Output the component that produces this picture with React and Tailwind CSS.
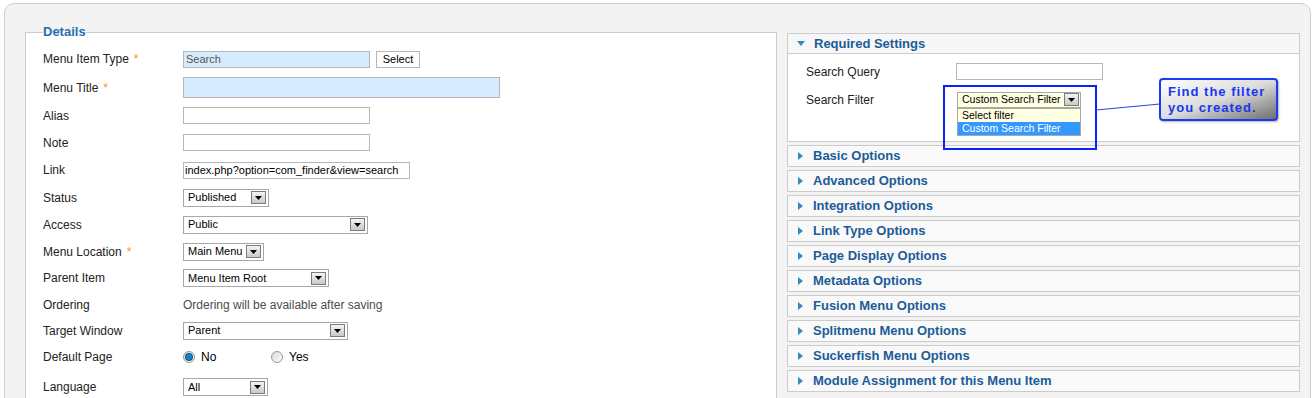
import React from 'react';

const font = "font-['Liberation_Sans',Arial,sans-serif]";

function Arrow() {
  return (
    <div className="mr-[2px] flex h-[13px] w-[15px] items-center justify-center border border-[#7c7c7c] bg-linear-to-b from-[#f4f4f4] to-[#c9c9c9]">
      <svg width="7" height="4" viewBox="0 0 7 4">
        <path d="M0 0h7L3.5 4z" fill="#000" />
      </svg>
    </div>
  );
}

function Select({ w, text }) {
  return (
    <div className={`flex h-[18px] items-center justify-between border border-[#a8a8a8] bg-white ${w}`}>
      <span className="whitespace-nowrap pl-[4px] text-[11px] text-black">{text}</span>
      <Arrow />
    </div>
  );
}

function Input({ w, h = 'h-[17px]', blue, children }) {
  return (
    <div className={`flex items-center border border-[#b7b7b7] ${blue ? 'bg-[#d6ebfd]' : 'bg-white'} ${w} ${h}`}>
      {children}
    </div>
  );
}

function Row({ label, req, h, children }) {
  return (
    <div className={`flex items-center ${h}`}>
      <div className="w-[140px] text-[12px] text-[#222]">
        {label}
        {req && <span className="ml-[5px] text-[#f39a1d]">*</span>}
      </div>
      {children}
    </div>
  );
}

function Radio({ checked }) {
  return (
    <span className="flex h-[12px] w-[12px] items-center justify-center rounded-full border border-[#9a9a9a] bg-linear-to-br from-[#d8d8d8] to-white">
      {checked && <span className="h-[6px] w-[6px] rounded-full bg-[#1a7fc0] ring-1 ring-[#0d5a8c]" />}
    </span>
  );
}

function Triangle({ down }) {
  return down ? (
    <svg width="8" height="5" viewBox="0 0 8 5" className="mr-[9px]">
      <path d="M0 0h8L4 5z" fill="#2f8bc4" />
    </svg>
  ) : (
    <svg width="5" height="8" viewBox="0 0 5 8" className="mr-[10px]">
      <path d="M0 0l5 4-5 4z" fill="#2f8bc4" />
    </svg>
  );
}

const options = [
  'Basic Options',
  'Advanced Options',
  'Integration Options',
  'Link Type Options',
  'Page Display Options',
  'Metadata Options',
  'Fusion Menu Options',
  'Splitmenu Menu Options',
  'Suckerfish Menu Options',
  'Module Assignment for this Menu Item',
];

export default function App() {
  return (
    <div className={`h-[398px] overflow-hidden bg-white pl-[4px] pr-[4px] pt-[3px] ${font}`}>
      <div className="h-[420px] w-[1307px] rounded-t-[10px] border border-[#cfcfcf] bg-[#f3f3f3] pl-[20px] pr-[10px] pt-[20px]">
        <div className="flex gap-[10px]">
          {/* Details */}
          <fieldset className="h-[400px] w-[752px] border border-[#cccccc] bg-white px-[17px] pt-[5px]">
            <legend className="text-[13px] font-bold leading-[16px] text-[#2570b0]">Details</legend>

            <Row label="Menu Item Type" req h="h-[28px]">
              <Input w="w-[187px]" blue>
                <span className="pl-[2px] text-[11px] text-[#555]">Search</span>
              </Input>
              <div className="ml-[6px] flex h-[17px] w-[44px] items-center justify-center border border-[#b7b7b7] bg-white text-[11px] text-black">
                Select
              </div>
            </Row>
            <Row label="Menu Title" req h="h-[29px]">
              <Input w="w-[317px]" h="h-[21px]" blue />
            </Row>
            <Row label="Alias" h="h-[27px]">
              <Input w="w-[187px]" />
            </Row>
            <Row label="Note" h="h-[27px]">
              <Input w="w-[187px]" />
            </Row>
            <Row label="Link" h="h-[28px]">
              <Input w="w-[227px]">
                <span className="whitespace-nowrap pl-[1px] text-[11px] text-black">index.php?option=com_finder&amp;view=search</span>
              </Input>
            </Row>
            <Row label="Status" h="h-[27px]">
              <Select w="w-[86px]" text="Published" />
            </Row>
            <Row label="Access" h="h-[27px]">
              <Select w="w-[185px]" text="Public" />
            </Row>
            <Row label="Menu Location" req h="h-[27px]">
              <Select w="w-[81px]" text="Main Menu" />
            </Row>
            <Row label="Parent Item" h="h-[26px]">
              <Select w="w-[146px]" text="Menu Item Root" />
            </Row>
            <Row label="Ordering" h="h-[27px]">
              <span className="text-[12px] text-[#4d4d4d]">Ordering will be available after saving</span>
            </Row>
            <Row label="Target Window" h="h-[25px]">
              <Select w="w-[165px]" text="Parent" />
            </Row>
            <Row label="Default Page" h="h-[28px]">
              <label className="flex w-[88px] items-center gap-[6px] text-[12px] text-black">
                <Radio checked />
                No
              </label>
              <label className="flex items-center gap-[6px] text-[12px] text-black">
                <Radio />
                Yes
              </label>
            </Row>
            <Row label="Language" h="h-[32px]">
              <Select w="w-[85px]" text="All" />
            </Row>
          </fieldset>

          {/* Right column */}
          <div className="relative mt-[9px] flex w-[513px] flex-col gap-[3px]">
            <div className="border border-[#cccccc] bg-white">
              <div className="flex h-[20px] items-center border-b border-[#cccccc] bg-[#f7f7f7] pl-[9px]">
                <Triangle down />
                <span className="text-[13px] font-bold text-[#1c5c98]">Required Settings</span>
              </div>
              <div className="h-[87px] pl-[18px] pt-[9px]">
                <div className="flex h-[17px] items-center">
                  <span className="w-[150px] text-[12px] text-[#222]">Search Query</span>
                  <div className="h-[17px] w-[147px] border border-[#b7b7b7] bg-white" />
                </div>
                <div className="mt-[11px] flex h-[17px] items-center">
                  <span className="w-[151px] text-[12px] text-[#222]">Search Filter</span>
                  <div className="relative">
                    <div className="flex h-[16px] w-[124px] items-center justify-between border border-[#a8a8a8] bg-[#ffffe1]">
                      <span className="whitespace-nowrap pl-[4px] text-[10.5px] text-black">Custom Search Filter</span>
                      <div className="mr-[1px] flex h-[13px] w-[15px] items-center justify-center border border-[#7c7c7c] bg-linear-to-b from-[#f4f4f4] to-[#c9c9c9]">
                        <svg width="7" height="4" viewBox="0 0 7 4">
                          <path d="M0 0h7L3.5 4z" fill="#000" />
                        </svg>
                      </div>
                    </div>
                    <div className="absolute left-0 top-[16px] z-10 w-[124px] whitespace-nowrap border border-[#a8a8a8] text-[10.5px] leading-[13px]">
                      <div className="bg-[#ffffe1] pl-[4px] text-black">Select filter</div>
                      <div className="bg-[#3399ff] pl-[4px] text-white">Custom Search Filter</div>
                    </div>
                  </div>
                </div>
              </div>
            </div>

            {options.map((o) => (
              <div key={o} className="flex h-[22px] items-center border border-[#cccccc] bg-[#f9f9f9] pl-[10px]">
                <Triangle />
                <span className="text-[13px] font-bold text-[#1c5c98]">{o}</span>
              </div>
            ))}

            {/* annotation */}
            <div className="absolute left-[156px] top-[52px] z-20 h-[65px] w-[154px] border-2 border-[#0a22f5]" />
            <svg className="absolute left-[309px] top-[69px] z-20" width="64" height="10" viewBox="0 0 64 10">
              <path d="M0 8L64 2" stroke="#2746e0" strokeWidth="1.2" />
            </svg>
            <div className="absolute left-[372px] top-[45px] z-20 h-[43px] w-[119px] rounded-[4px] border-2 border-[#1a3cf0] bg-linear-to-br from-white via-[#dcdcdc] to-[#6f6f6f] pl-[7px] pt-[4px] text-[13px] font-bold leading-[16px] tracking-[1px] text-[#1638f0] shadow-[1px_1px_2px_rgba(0,0,0,0.3)]">
              Find the filter
              <br />
              you created.
            </div>
          </div>
        </div>
      </div>
    </div>
  );
}
